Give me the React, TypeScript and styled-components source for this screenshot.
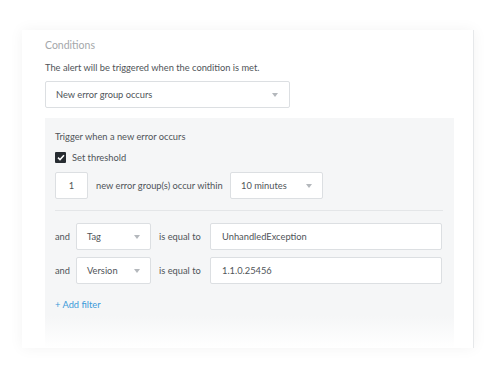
import React from "react";
import styled, { createGlobalStyle } from "styled-components";

const Global = createGlobalStyle`
  html, body {
    margin: 0;
    padding: 0;
    background: #ffffff;
    font-family: Lato, "Open Sans", sans-serif;
  }
  * { box-sizing: border-box; }
`;

const Page = styled.div`
  width: 500px;
  height: 383px;
  padding: 30px 26px 0 22px;
  overflow: hidden;
`;

const Card = styled.div`
  width: 452px;
  height: 318px;
  background: #ffffff;
  box-shadow: 0 0 14px rgba(0, 0, 0, 0.05);
  border-right: 1px solid #e6e8ea;
  padding: 8px 0 0 23px;
  display: flex;
  flex-direction: column;
  overflow: hidden;
`;

const Title = styled.div`
  font-size: 10.5px;
  line-height: 14px;
  color: #a4a7aa;
`;

const Description = styled.div`
  margin-top: 9px;
  font-size: 9.3px;
  line-height: 14px;
  color: #4f5458;
`;

const SelectBox = styled.div<{ $w: number }>`
  width: ${(p) => p.$w}px;
  height: 27px;
  flex: none;
  background: #ffffff;
  border: 1px solid #dcdfe2;
  border-radius: 2px;
  display: flex;
  align-items: center;
  justify-content: space-between;
  padding: 0 10px 0 10px;
  font-size: 9.3px;
  color: #4f5458;
`;

const Arrow = styled.span`
  width: 0;
  height: 0;
  border-left: 3px solid transparent;
  border-right: 3px solid transparent;
  border-top: 4px solid #b4b8bc;
`;

const MainSelect = styled(SelectBox)`
  margin-top: 6px;
  padding-right: 11px;
`;

const Panel = styled.div`
  margin-top: 10px;
  width: 409px;
  height: 230px;
  background: linear-gradient(#f5f6f7 0%, #f5f6f7 86%, #ffffff 100%);
  padding: 12px 11px 0 10px;
  display: flex;
  flex-direction: column;
`;

const PanelText = styled.div`
  font-size: 9.3px;
  line-height: 14px;
  color: #4f5458;
`;

const CheckRow = styled.div`
  margin-top: 8px;
  display: flex;
  align-items: center;
  gap: 6px;
  font-size: 9.3px;
  color: #4f5458;
`;

const Check = styled.span`
  width: 11px;
  height: 11px;
  border-radius: 1px;
  background: #272c31;
  display: flex;
  align-items: center;
  justify-content: center;
`;

const Row = styled.div<{ $top: number }>`
  margin-top: ${(p) => p.$top}px;
  display: flex;
  align-items: center;
  font-size: 9.3px;
  color: #4f5458;
  white-space: nowrap;
`;

const Input = styled.div<{ $w: number; $center?: boolean }>`
  width: ${(p) => p.$w}px;
  height: 27px;
  flex: none;
  background: #ffffff;
  border: 1px solid #dcdfe2;
  border-radius: 2px;
  display: flex;
  align-items: center;
  justify-content: ${(p) => (p.$center ? "center" : "flex-start")};
  padding: 0 ${(p) => (p.$center ? 0 : 11)}px;
  font-size: 9.3px;
  color: #4f5458;
`;

const Label = styled.span<{ $w: number }>`
  width: ${(p) => p.$w}px;
  flex: none;
  padding-left: ${(p) => (p.$w > 30 ? 8 : 0)}px;
`;

const Divider = styled.div`
  margin-top: 11px;
  height: 1px;
  background: #e4e6e8;
`;

const AddFilter = styled.div`
  margin-top: 14px;
  font-size: 9.3px;
  line-height: 14px;
  color: #3b9ad9;
`;

const Select = ({ w, label }: { w: number; label: string }) => (
  <SelectBox $w={w}>
    <span>{label}</span>
    <Arrow />
  </SelectBox>
);

export default function App() {
  return (
    <Page>
      <Global />
      <Card>
        <Title>Conditions</Title>
        <Description>The alert will be triggered when the condition is met.</Description>
        <MainSelect $w={245}>
          <span>New error group occurs</span>
          <Arrow />
        </MainSelect>
        <Panel>
          <PanelText>Trigger when a new error occurs</PanelText>
          <CheckRow>
            <Check>
              <svg width="8" height="7" viewBox="0 0 8 7">
                <path d="M1 3.6 L3 5.6 L7 1.2" fill="none" stroke="#fff" strokeWidth="1.5" />
              </svg>
            </Check>
            Set threshold
          </CheckRow>
          <Row $top={9}>
            <Input $w={33} $center>1</Input>
            <Label $w={142}>new error group(s) occur within</Label>
            <Select w={93} label="10 minutes" />
          </Row>
          <Divider />
          <Row $top={12}>
            <Label $w={21}>and</Label>
            <Select w={75} label="Tag" />
            <Label $w={59}>is equal to</Label>
            <Input $w={232}>UnhandledException</Input>
          </Row>
          <Row $top={7}>
            <Label $w={21}>and</Label>
            <Select w={75} label="Version" />
            <Label $w={59}>is equal to</Label>
            <Input $w={232}>1.1.0.25456</Input>
          </Row>
          <AddFilter>+ Add filter</AddFilter>
        </Panel>
      </Card>
    </Page>
  );
}
